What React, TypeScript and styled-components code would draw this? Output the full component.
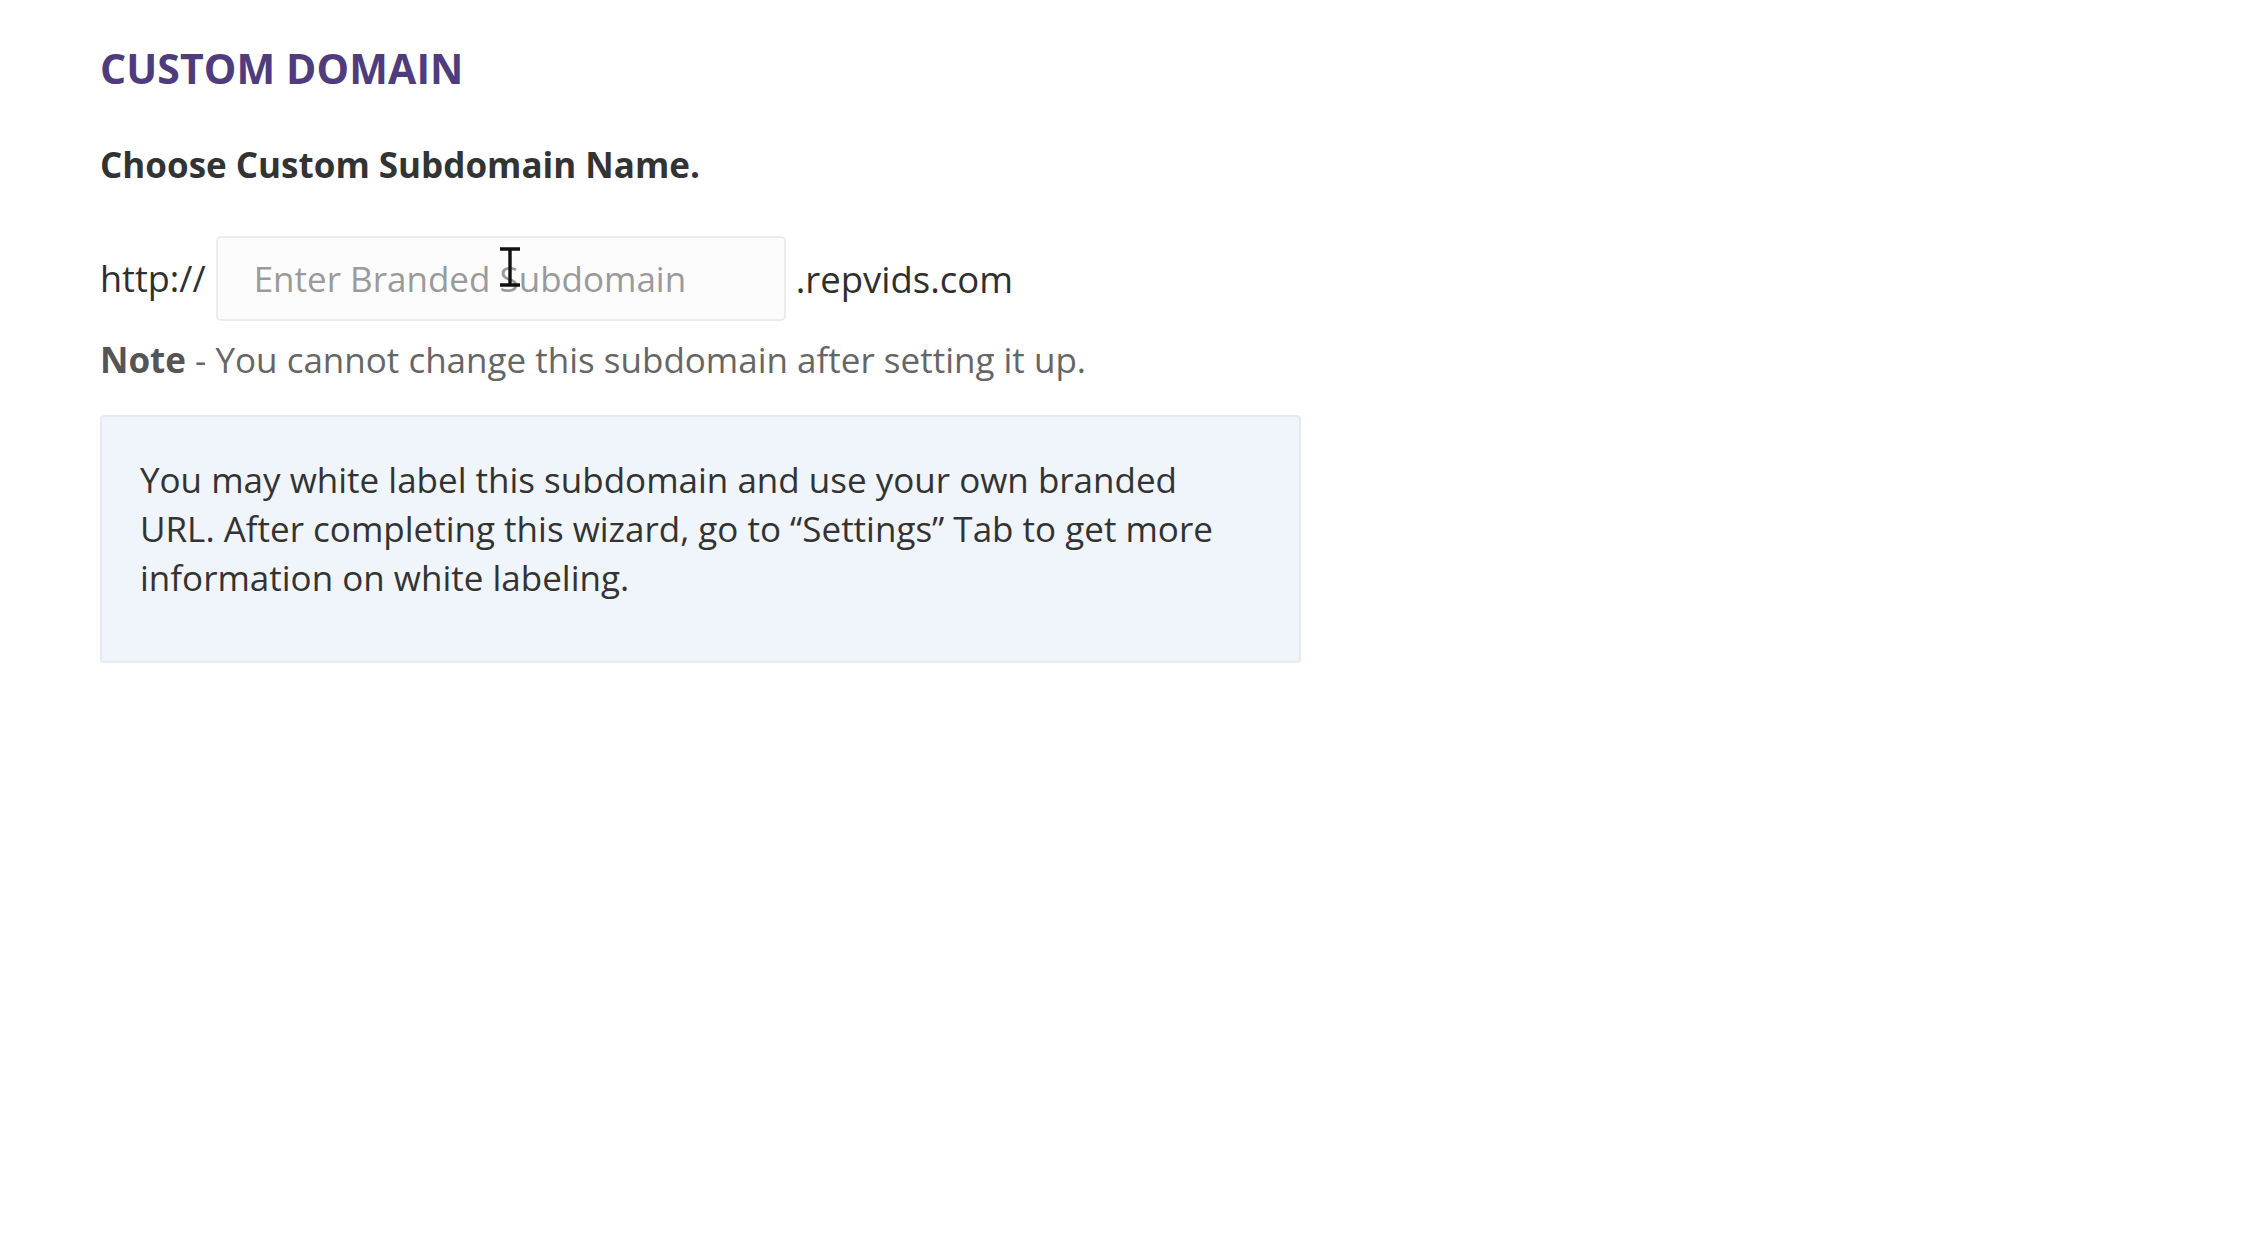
import React from "react";
import styled, { createGlobalStyle } from "styled-components";

const GlobalStyle = createGlobalStyle`
  html, body {
    margin: 0;
    padding: 0;
    background: #ffffff;
  }
  body {
    font-family: "Open Sans", "Noto Sans", sans-serif;
    color: #333333;
  }
`;

const Page = styled.div`
  width: 2266px;
  min-height: 1256px;
  box-sizing: border-box;
  padding: 40px 0 0 100px;
`;

const Section = styled.section`
  width: 1201px;
  display: flex;
  flex-direction: column;
`;

const Title = styled.h1`
  margin: 0;
  font-size: 41px;
  line-height: 56px;
  font-weight: 700;
  color: #4f3c7c;
  letter-spacing: 0.1px;
`;

const Subtitle = styled.h2`
  margin: 45px 0 0;
  font-size: 35px;
  line-height: 48px;
  font-weight: 700;
  color: #333333;
`;

const DomainRow = styled.div`
  margin-top: 47px;
  display: flex;
  align-items: center;
  gap: 10px;
  font-size: 36px;
  color: #2f2f2f;
`;

const Prefix = styled.span`
  line-height: 48px;
`;

const InputWrap = styled.div`
  position: relative;
  display: flex;
`;

const SubdomainInput = styled.input`
  width: 570px;
  height: 85px;
  box-sizing: border-box;
  padding: 0 36px;
  border: 2px solid #ececec;
  border-radius: 5px;
  background: #fcfcfc;
  font-family: "Open Sans", "Noto Sans", sans-serif;
  font-size: 35px;
  color: #333333;
  outline: none;

  &::placeholder {
    color: #9a9a9a;
  }
`;

const Cursor = styled.svg`
  position: absolute;
  left: 282px;
  top: 11px;
  pointer-events: none;
`;

const Suffix = styled.span`
  line-height: 48px;
  font-size: 36.5px;
`;

const Note = styled.p`
  margin: 15px 0 0;
  font-size: 35px;
  line-height: 48px;
  color: #666666;

  strong {
    color: #555555;
    font-weight: 700;
  }
`;

const InfoBox = styled.div`
  margin-top: 31px;
  box-sizing: border-box;
  width: 1201px;
  height: 248px;
  padding: 38px 40px 0 38px;
  background: #f0f4fb;
  border: 2px solid #e7eaef;
  border-radius: 4px;
  font-size: 35px;
  line-height: 49px;
  color: #333333;
`;

export default function App() {
  return (
    <>
      <GlobalStyle />
      <Page>
        <Section>
          <Title>CUSTOM DOMAIN</Title>
          <Subtitle>Choose Custom Subdomain Name.</Subtitle>
          <DomainRow>
            <Prefix>http://</Prefix>
            <InputWrap>
              <SubdomainInput placeholder="Enter Branded Subdomain" />
              <Cursor width="24" height="40" viewBox="0 0 24 40">
                <path
                  d="M2 2h20M12 2v36M2 38h20"
                  fill="none"
                  stroke="#111111"
                  strokeWidth="3.4"
                />
              </Cursor>
            </InputWrap>
            <Suffix>.repvids.com</Suffix>
          </DomainRow>
          <Note>
            <strong>Note</strong> - You cannot change this subdomain after
            setting it up.
          </Note>
          <InfoBox>
            You may white label this subdomain and use your own branded URL.
            After completing this wizard, go to “Settings” Tab to get more
            information on white labeling.
          </InfoBox>
        </Section>
      </Page>
    </>
  );
}
